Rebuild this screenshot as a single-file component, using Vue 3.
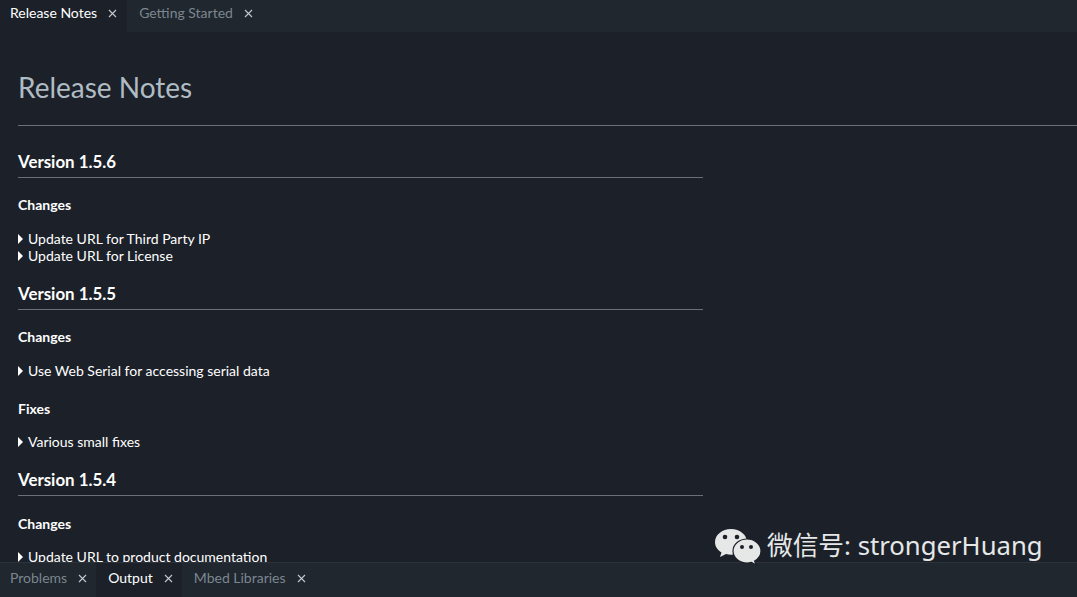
<script setup>
const topTabs = [
  { label: 'Release Notes', active: true },
  { label: 'Getting Started', active: false }
]
const bottomTabs = [
  { label: 'Problems', active: false },
  { label: 'Output', active: true },
  { label: 'Mbed Libraries', active: false }
]
const versions = [
  {
    name: 'Version 1.5.6',
    groups: [{ title: 'Changes', items: ['Update URL for Third Party IP', 'Update URL for License'] }]
  },
  {
    name: 'Version 1.5.5',
    groups: [
      { title: 'Changes', items: ['Use Web Serial for accessing serial data'] },
      { title: 'Fixes', items: ['Various small fixes'] }
    ]
  },
  {
    name: 'Version 1.5.4',
    groups: [{ title: 'Changes', items: ['Update URL to product documentation'] }]
  }
]
</script>

<template>
  <div class="app">
    <div class="tabs top">
      <div v-for="t in topTabs" :key="t.label" class="tab" :class="{ active: t.active }">
        <span>{{ t.label }}</span>
        <svg class="close" width="9" height="9" viewBox="0 0 9 9"><path d="M1 1l7 7M8 1L1 8" /></svg>
      </div>
    </div>
    <div class="content">
      <h1>Release Notes</h1>
      <div class="rule"></div>
      <div v-for="v in versions" :key="v.name" class="version">
        <h2>{{ v.name }}</h2>
        <div v-for="g in v.groups" :key="g.title" class="group">
          <h3>{{ g.title }}</h3>
          <ul>
            <li v-for="item in g.items" :key="item">{{ item }}</li>
          </ul>
        </div>
      </div>
    </div>
    <div class="tabs bottom">
      <div v-for="t in bottomTabs" :key="t.label" class="tab" :class="{ active: t.active }">
        <span>{{ t.label }}</span>
        <svg class="close" width="9" height="9" viewBox="0 0 9 9"><path d="M1 1l7 7M8 1L1 8" /></svg>
      </div>
    </div>
    <div class="mark">
      <svg width="46" height="40" viewBox="0 0 46 40">
        <path class="bubble" d="M16 2C7 2 0 8 0 15c0 4.500 2.600 8.200 6.500 10.500L5 30l6-3c1.700.5 3.300.7 5 .7C25 27.700 32 22 32 15S25 2 16 2z" />
        <circle class="eye" cx="10" cy="10" r="2.300" />
        <circle class="eye" cx="22" cy="10" r="2.300" />
        <path class="bubble front" d="M46 24c0-6.600-6.300-12-14-12s-14 5.400-14 12 6.300 12 14 12c1.600 0 3-.2 4.500-.7L41 38l-1.400-4C43.500 31.800 46 28.200 46 24z" />
        <circle class="eye" cx="27" cy="20" r="2" />
        <circle class="eye" cx="36" cy="20" r="2" />
      </svg>
      <span>微信号: strongerHuang</span>
    </div>
  </div>
</template>

<style scoped>
.app {
  position: relative;
  display: flex;
  flex-direction: column;
  width: 1077px;
  height: 597px;
  overflow: hidden;
  background: #1c2129;
  font-family: Lato, "Liberation Sans", sans-serif;
  color: #fff;
}
.tabs {
  display: flex;
  flex: none;
  background: #20272e;
  font-size: 14px;
  color: #7b8690;
}
.top {
  height: 32px;
}
.bottom {
  height: 35px;
  border-top: 1px solid #2c333a;
  box-sizing: border-box;
}
.tab {
  display: flex;
  align-items: center;
  gap: 11px;
  padding: 0 9px 6px 12px;
}
.tab:first-child {
  padding-left: 10px;
}
.top .tab {
  padding-right: 10px;
  padding-bottom: 8px;
}
.tab.active {
  background: #1c2129;
  color: #fff;
}
.tab .close {
  fill: none;
  stroke: #c4c9cd;
  stroke-width: 1.1;
  margin-top: 3px;
}
.content {
  flex: 1;
  min-height: 0;
  overflow: hidden;
  padding: 0 18px;
}
h1 {
  margin: 37px 0 20px;
  font-size: 28px;
  line-height: 36px;
  font-weight: 400;
  color: #b0bcc4;
}
.rule {
  height: 1px;
  margin-right: -18px;
  background: #6a7076;
  margin-bottom: 25px;
}
.version {
  width: 685px;
  margin-bottom: 19px;
}
h2 {
  margin: 0 0 18px;
  padding-bottom: 5px;
  border-bottom: 1px solid #6a7076;
  font-size: 16.9px;
  line-height: 21px;
  font-weight: 700;
}
h3 {
  margin: 0 0 17px;
  font-size: 14px;
  line-height: 17px;
  font-weight: 700;
}
.group + .group h3,
.version:last-child h3 {
  margin-bottom: 16px;
}
.version:last-child h2 {
  margin-bottom: 19px;
}
ul {
  margin: 0 0 21px;
  padding: 0;
  list-style: none;
}
.group:last-child ul {
  margin-bottom: 0;
}
li {
  position: relative;
  padding-left: 10px;
  font-size: 14px;
  line-height: 17px;
}
li::before {
  content: "";
  position: absolute;
  left: 0;
  top: 4px;
  border-left: 5px solid #fff;
  border-top: 5px solid transparent;
  border-bottom: 5px solid transparent;
}
.mark {
  position: absolute;
  left: 715px;
  top: 527px;
  display: flex;
  align-items: center;
  gap: 6px;
  font-family: "Noto Sans", "Noto Sans CJK SC", sans-serif;
  font-size: 25.7px;
  line-height: 36px;
  color: #e6e8e8;
  white-space: nowrap;
}
.mark span {
  margin-top: -2px;
}
.bubble {
  fill: #e6e7e7;
}
.bubble.front {
  stroke: #1c2129;
  stroke-width: 1.2;
}
.eye {
  fill: #1c2129;
}
</style>

<style>
html, body {
  margin: 0;
  background: #1c2129;
}
</style>
